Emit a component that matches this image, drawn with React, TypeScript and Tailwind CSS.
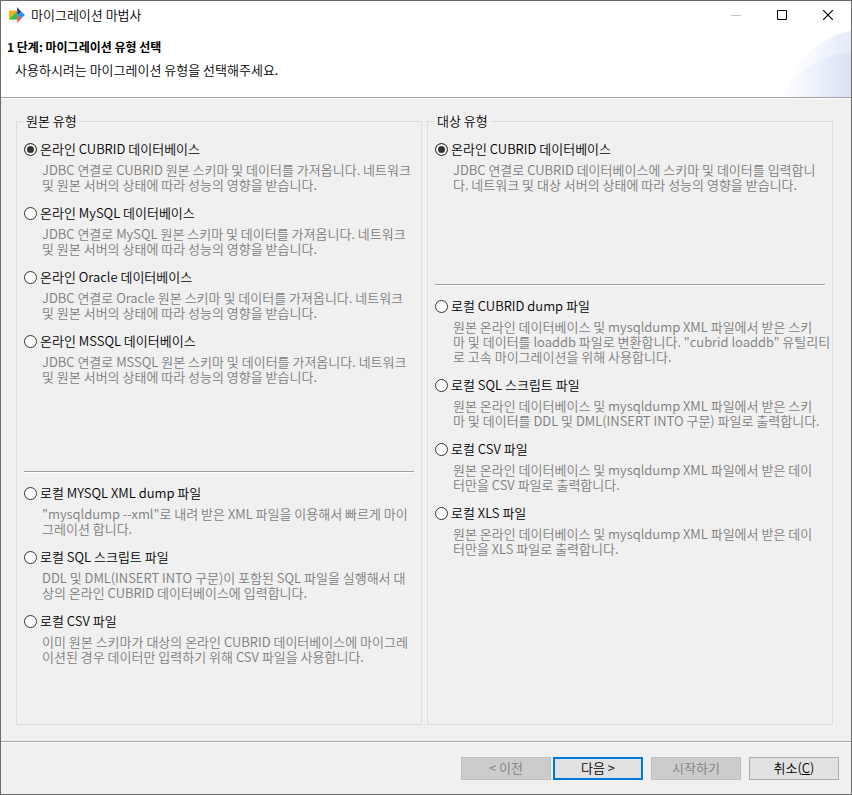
import { useState } from "react";

type Option = { id: string; label: string; lines: string[] };

const sourceOnline: Option[] = [
  { id: "src-cubrid", label: "온라인 CUBRID 데이터베이스", lines: ["JDBC 연결로 CUBRID 원본 스키마 및 데이터를 가져옵니다. 네트워크", "및 원본 서버의 상태에 따라 성능의 영향을 받습니다."] },
  { id: "src-mysql", label: "온라인 MySQL 데이터베이스", lines: ["JDBC 연결로 MySQL 원본 스키마 및 데이터를 가져옵니다. 네트워크", "및 원본 서버의 상태에 따라 성능의 영향을 받습니다."] },
  { id: "src-oracle", label: "온라인 Oracle 데이터베이스", lines: ["JDBC 연결로 Oracle 원본 스키마 및 데이터를 가져옵니다. 네트워크", "및 원본 서버의 상태에 따라 성능의 영향을 받습니다."] },
  { id: "src-mssql", label: "온라인 MSSQL 데이터베이스", lines: ["JDBC 연결로 MSSQL 원본 스키마 및 데이터를 가져옵니다. 네트워크", "및 원본 서버의 상태에 따라 성능의 영향을 받습니다."] },
];

const sourceLocal: Option[] = [
  { id: "src-xml", label: "로컬 MYSQL XML dump 파일", lines: ['"mysqldump --xml"로 내려 받은 XML 파일을 이용해서 빠르게 마이', "그레이션 합니다."] },
  { id: "src-sql", label: "로컬 SQL 스크립트 파일", lines: ["DDL 및 DML(INSERT INTO 구문)이 포함된 SQL 파일을 실행해서 대", "상의 온라인 CUBRID 데이터베이스에 입력합니다."] },
  { id: "src-csv", label: "로컬 CSV 파일", lines: ["이미 원본 스키마가 대상의 온라인 CUBRID 데이터베이스에 마이그레", "이션된 경우 데이터만 입력하기 위해 CSV 파일을 사용합니다."] },
];

const targetOnline: Option[] = [
  { id: "dst-cubrid", label: "온라인 CUBRID 데이터베이스", lines: ["JDBC 연결로 CUBRID 데이터베이스에 스키마 및 데이터를 입력합니", "다. 네트워크 및 대상 서버의 상태에 따라 성능의 영향을 받습니다."] },
];

const targetLocal: Option[] = [
  { id: "dst-dump", label: "로컬 CUBRID dump 파일", lines: ["원본 온라인 데이터베이스 및 mysqldump XML 파일에서 받은 스키", '마 및 데이터를 loaddb 파일로 변환합니다. "cubrid loaddb" 유틸리티', "로 고속 마이그레이션을 위해 사용합니다."] },
  { id: "dst-sql", label: "로컬 SQL 스크립트 파일", lines: ["원본 온라인 데이터베이스 및 mysqldump XML 파일에서 받은 스키", "마 및 데이터를 DDL 및 DML(INSERT INTO 구문) 파일로 출력합니다."] },
  { id: "dst-csv", label: "로컬 CSV 파일", lines: ["원본 온라인 데이터베이스 및 mysqldump XML 파일에서 받은 데이", "터만을 CSV 파일로 출력합니다."] },
  { id: "dst-xls", label: "로컬 XLS 파일", lines: ["원본 온라인 데이터베이스 및 mysqldump XML 파일에서 받은 데이", "터만을 XLS 파일로 출력합니다."] },
];

function OptionList({ name, options, value, onChange }: { name: string; options: Option[]; value: string; onChange: (id: string) => void }) {
  return (
    <div className="flex flex-col gap-[13px]">
      {options.map((o) => (
        <div key={o.id}>
          <div className="flex h-[17px] items-center gap-[3px]">
            <input
              type="radio"
              id={o.id}
              name={name}
              checked={value === o.id}
              onChange={() => onChange(o.id)}
              aria-describedby={o.id + "-desc"}
              className="size-[13px] shrink-0 appearance-none rounded-full border border-[#333] bg-white checked:bg-[#333] checked:shadow-[inset_0_0_0_2px_#fff]"
            />
            <label htmlFor={o.id} className="pb-[2px] leading-[15px] whitespace-nowrap text-black">{o.label}</label>
          </div>
          <p id={o.id + "-desc"} className="mt-1 pl-[18px] leading-[15px] whitespace-pre text-[#7c7c7c]">{o.lines.join("\n")}</p>
        </div>
      ))}
    </div>
  );
}

function Group(props: { title: string; name: string; online: Option[]; local: Option[]; onlineClass: string }) {
  const [value, setValue] = useState(props.online[0].id);
  return (
    <fieldset className="min-w-0 flex-1 border border-[#dcdcdc] px-[7px] pb-3">
      <legend className="px-[2px] pb-[2px] leading-[15px] text-black">{props.title}</legend>
      <div className={"pt-[11px] " + props.onlineClass}>
        <OptionList name={props.name} options={props.online} value={value} onChange={setValue} />
      </div>
      <hr className="mb-3 h-[2px] border-t border-b border-t-[#a0a0a0] border-b-white" />
      <OptionList name={props.name} options={props.local} value={value} onChange={setValue} />
    </fieldset>
  );
}

function AppIcon() {
  return (
    <svg width="16" height="16" viewBox="0 0 16 16" aria-hidden="true">
      <path d="M0 3.500h8.500v9H0z" fill="#fbae17" />
      <path d="M0 12.500 8.500 4v8.500z" fill="#22c55e" />
      <path d="M8 0 12.500 5 8.500 8z" fill="#1f3a93" />
      <path d="M12 4.500 16 8 12 11.500 8.500 8z" fill="#2f8df0" />
      <path d="M8.500 8l4 3.500L8 16z" fill="#f4525c" />
    </svg>
  );
}

function HeaderArt() {
  return (
    <svg className="h-[67px] w-[72px]" viewBox="0 0 72 67" aria-hidden="true">
      <defs>
        <linearGradient id="back" gradientUnits="userSpaceOnUse" x1="0" y1="0" x2="72" y2="0"><stop offset="0" stopColor="#fff" /><stop offset="0.5" stopColor="#f7f9fe" /><stop offset="1" stopColor="#e8eefa" /></linearGradient>
        <linearGradient id="middle" gradientUnits="userSpaceOnUse" x1="32" y1="0" x2="72" y2="0"><stop offset="0" stopColor="#f4f7fd" /><stop offset="1" stopColor="#e4ebf9" /></linearGradient>
        <linearGradient id="front" gradientUnits="userSpaceOnUse" x1="0" y1="0" x2="72" y2="0"><stop offset="0" stopColor="#fff" /><stop offset="0.3" stopColor="#f6f8fd" /><stop offset="0.6" stopColor="#e8eefa" /><stop offset="1" stopColor="#dbe2f6" /></linearGradient>
      </defs>
      <path d="M0 67C14 32 42 5 72 1V67z" fill="url(#back)" />
      <path d="M32 36C42 16 56 4 72 1V36z" fill="url(#middle)" />
      <path d="M0 67C12 44 40 26 72 22V67z" fill="url(#front)" />
    </svg>
  );
}

const btn = "h-[23px] w-[90px] border pb-[2px] text-center leading-[19px]";

export default function App() {
  return (
    <main className="flex min-h-screen flex-col border border-[#6b6b6b] bg-[#f0f0f0] font-['Noto_Sans_CJK_KR',sans-serif] text-[13px] font-[350] text-black">
      <div className="flex h-[28px] items-center bg-white pl-2">
        <AppIcon />
        <h1 className="ml-[6px] flex-1 pb-[2px] leading-[15px] font-[350]">마이그레이션 마법사</h1>
        <button aria-label="최소화" disabled className="grid h-full w-[46px] place-items-center">
          <svg width="10" height="10"><path d="M0 5.500h10" stroke="#c4c4c4" /></svg>
        </button>
        <button aria-label="최대화" className="grid h-full w-[46px] place-items-center">
          <svg width="10" height="10"><path d="M.5.5h9v9h-9z" fill="none" stroke="#000" /></svg>
        </button>
        <button aria-label="닫기" className="grid h-full w-[46px] place-items-center">
          <svg width="10" height="10"><path d="M0 0l10 10M10 0L0 10" stroke="#000" strokeWidth="1.2" /></svg>
        </button>
      </div>
      <header className="flex h-[68px] items-end bg-white">
        <div className="flex-1 self-start pt-[9px] pl-[6px]">
          <h2 className="text-[12px] leading-[17px] font-bold">1 단계: 마이그레이션 유형 선택</h2>
          <p className="mt-[6px] pl-2 leading-[17px]">사용하시려는 마이그레이션 유형을 선택해주세요.</p>
        </div>
        <HeaderArt />
      </header>
      <div className="h-[2px] border-t border-b border-t-[#a0a0a0] border-b-white" />
      <div className="flex flex-1 gap-[5px] pt-[14px] pr-[18px] pb-4 pl-[15px]">
        <Group title="원본 유형" name="source" online={sourceOnline} local={sourceLocal} onlineClass="min-h-[341px]" />
        <Group title="대상 유형" name="target" online={targetOnline} local={targetLocal} onlineClass="min-h-[154px]" />
      </div>
      <div className="h-[2px] border-t border-b border-t-[#a0a0a0] border-b-white" />
      <footer className="flex justify-end gap-2 py-[14px] pr-3">
        <div className="flex gap-[2px]">
          <button disabled className={btn + " border-[#bfbfbf] bg-[#cccccc] text-[#7c7c7c]"}>&lt; 이전</button>
          <button className="h-[23px] w-[90px] border-2 border-[#0078d7] bg-[#e1e1e1] pb-[2px] text-center leading-[17px]">다음 &gt;</button>
        </div>
        <button disabled className={btn + " border-[#bfbfbf] bg-[#cccccc] text-[#7c7c7c]"}>시작하기</button>
        <button className={btn + " border-[#adadad] bg-[#e1e1e1]"}>취소(<u>C</u>)</button>
      </footer>
    </main>
  );
}
